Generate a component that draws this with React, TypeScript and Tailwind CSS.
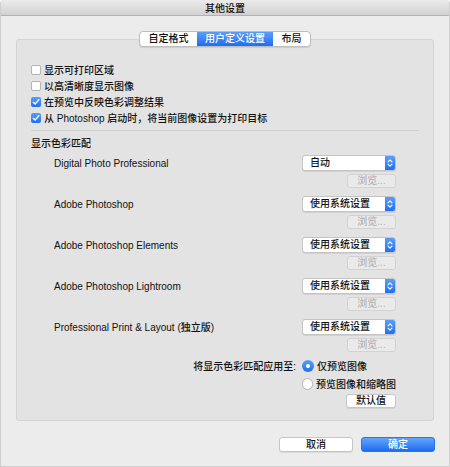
const apps = [
  { name: 'Digital Photo Professional', value: '自动' },
  { name: 'Adobe Photoshop', value: '使用系统设置' },
  { name: 'Adobe Photoshop Elements', value: '使用系统设置' },
  { name: 'Adobe Photoshop Lightroom', value: '使用系统设置' },
  { name: 'Professional Print & Layout (独立版)', value: '使用系统设置' },
]

const checks = [
  { label: '显示可打印区域', checked: false },
  { label: '以高清晰度显示图像', checked: false },
  { label: '在预览中反映色彩调整结果', checked: true },
  { label: '从 Photoshop 启动时，将当前图像设置为打印目标', checked: true },
]

function CheckRow({ label, checked }: { label: string; checked: boolean }) {
  return (
    <div className="flex h-4 items-center gap-[3px]">
      {checked ? (
        <span className="flex h-[10px] w-[10px] items-center justify-center rounded-[2px] bg-gradient-to-b from-[#5a9df9] to-[#1f6ff0]">
          <svg width="8" height="8" viewBox="0 0 8 8">
            <path d="M1.3 4.2 L3.2 6.1 L6.8 1.6" fill="none" stroke="white" strokeWidth="1.4" strokeLinecap="round" strokeLinejoin="round" />
          </svg>
        </span>
      ) : (
        <span className="h-[10px] w-[10px] rounded-[2px] border border-[#b4b4b4] bg-white" />
      )}
      <span>{label}</span>
    </div>
  )
}

function Select({ value }: { value: string }) {
  return (
    <div className="flex h-4 w-[94px] items-stretch rounded-[3px] border border-[#c4c4c4] bg-white shadow-[0_1px_0_rgba(0,0,0,0.08)]">
      <span className="flex flex-1 items-center pl-[7px] leading-none">{value}</span>
      <span className="flex w-[10px] items-center justify-center rounded-r-[2px] bg-gradient-to-b from-[#5a9df9] to-[#1f6ff0]">
        <svg width="6" height="10" viewBox="0 0 6 10">
          <path d="M1 3.8 L3 1.8 L5 3.8 M1 6.2 L3 8.2 L5 6.2" fill="none" stroke="white" strokeWidth="1.1" strokeLinecap="round" strokeLinejoin="round" />
        </svg>
      </span>
    </div>
  )
}

export default function App() {
  return (
    <div
      className="flex h-[467px] w-[450px] flex-col overflow-hidden rounded-t-[4px] border-x border-b border-[#cfcfcf] bg-[#ececec] text-[10px] font-medium text-[#111]"
      style={{ fontFamily: '"Liberation Sans", "Noto Sans CJK SC", sans-serif' }}
    >
      <div className="flex h-4 shrink-0 items-center justify-center border-b border-[#b3b3b3] bg-gradient-to-b from-[#ebebeb] to-[#d2d2d2] pt-[2px] leading-none">
        其他设置
      </div>

      <div className="relative z-10 -mb-2 mt-[15px] flex justify-center">
        <div className="flex h-4 overflow-hidden rounded-[4px] border border-[#bdbdbd] bg-white leading-none shadow-[0_1px_1px_rgba(0,0,0,0.1)]">
          <span className="flex w-[57px] items-center justify-center">自定格式</span>
          <span className="flex w-[76px] items-center justify-center bg-gradient-to-b from-[#5a9df9] to-[#1c6df1] text-white">用户定义设置</span>
          <span className="flex w-[37px] items-center justify-center">布局</span>
        </div>
      </div>

      <div className="mx-[15px] flex h-[382px] shrink-0 flex-col rounded-[3px] border border-[#d4d4d4] bg-[#e3e3e3] pl-[14px] pr-[14px] pt-[22px]">
        {checks.map((c) => (
          <CheckRow key={c.label} label={c.label} checked={c.checked} />
        ))}
        <div className="mt-1 h-px bg-[#d0d0d0]" />
        <div className="mt-[5px] flex h-[14px] items-center">显示色彩匹配</div>

        <div className="mt-[5px] flex flex-col gap-2 pr-[23px]">
          {apps.map((a) => (
            <div key={a.name} className="flex flex-col items-end gap-[3px]">
              <div className="flex w-full items-center justify-between">
                <span className="pl-[23px]">{a.name}</span>
                <Select value={a.value} />
              </div>
              <button className="flex h-[14px] w-[49px] items-center justify-center rounded-[3px] border border-[#d2d2d2] bg-[#eaeaea] leading-none text-[#b3b3b3]">
                浏览...
              </button>
            </div>
          ))}
        </div>

        <div className="mt-[5px] flex pr-[23px]">
          <div className="flex h-[18px] flex-1 items-center justify-end pr-[6px]">将显示色彩匹配应用至:</div>
          <div className="flex w-[94px] flex-col">
            <div className="flex h-[18px] items-center gap-[3px] whitespace-nowrap">
              <span className="flex h-3 w-3 items-center justify-center rounded-full bg-gradient-to-b from-[#5a9df9] to-[#1f6ff0]">
                <span className="h-1 w-1 rounded-full bg-white" />
              </span>
              仅预览图像
            </div>
            <div className="flex h-[18px] items-center gap-[3px] whitespace-nowrap">
              <span className="h-3 w-3 rounded-full border border-[#b4b4b4] bg-white" />
              预览图像和缩略图
            </div>
            <button className="mt-px flex h-[14px] w-[50px] items-center justify-center self-end rounded-[3px] border border-[#c6c6c6] bg-white leading-none shadow-[0_1px_0_rgba(0,0,0,0.08)]">
              默认值
            </button>
          </div>
        </div>
      </div>

      <div className="mr-[14px] mt-4 flex justify-end gap-2">
        <button className="flex h-[15px] w-[74px] items-center justify-center rounded-[3px] border border-[#c6c6c6] bg-white leading-none shadow-[0_1px_0_rgba(0,0,0,0.08)]">
          取消
        </button>
        <button className="flex h-[15px] w-[74px] items-center justify-center rounded-[3px] border border-[#2a74ec] bg-gradient-to-b from-[#64a5fa] to-[#1b6cf1] leading-none text-white">
          确定
        </button>
      </div>
    </div>
  )
}
